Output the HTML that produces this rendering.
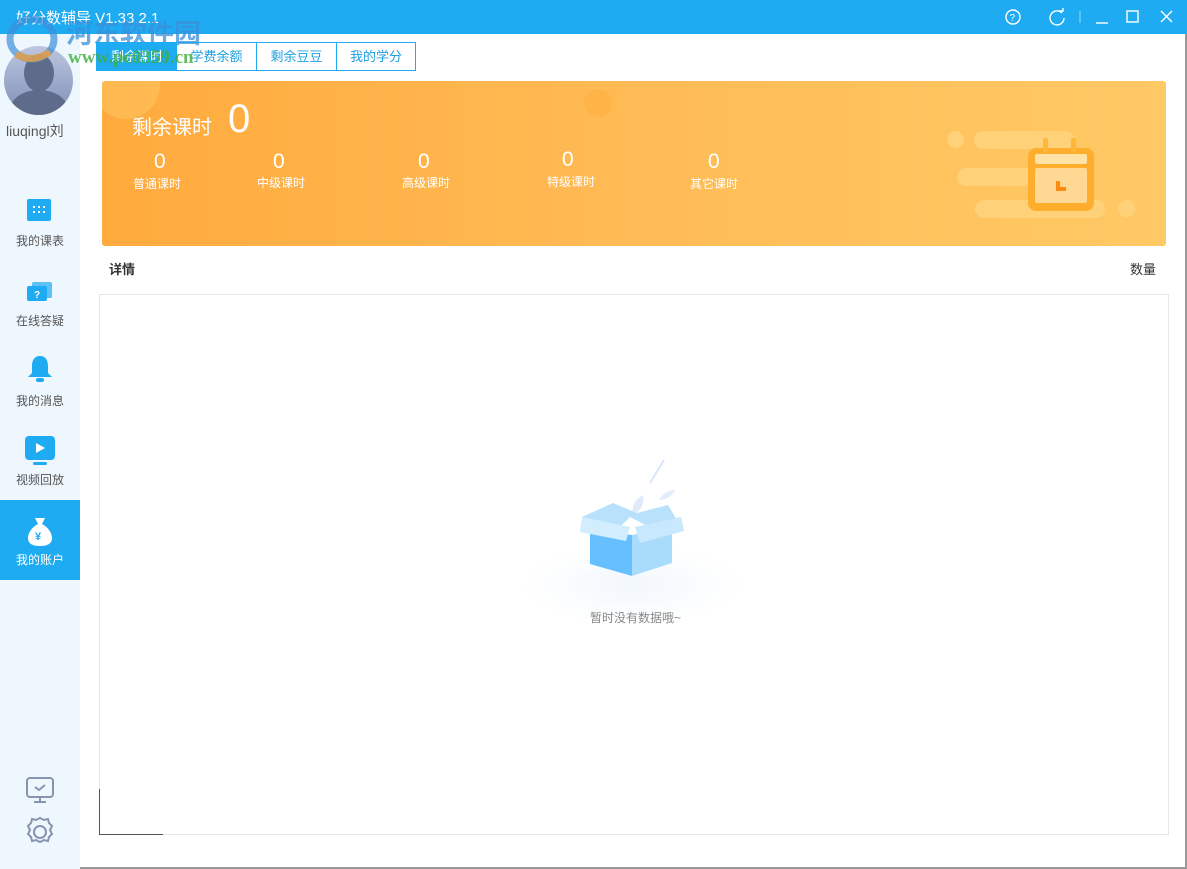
<!DOCTYPE html><html><head><meta charset="utf-8"><style>
*{margin:0;padding:0;box-sizing:border-box}
body{width:1187px;height:869px;overflow:hidden;background:#fff;font-family:"Liberation Sans","Noto Sans CJK SC",sans-serif;position:relative}
.t{position:absolute;white-space:nowrap}
</style></head><body>
<div style="position:absolute;left:0;top:0;width:1187px;height:34px;background:#1eabf2"></div>
<div class="t" style="left:16px;top:7px;color:#fff;font-size:15px">好分数辅导 V1.33.2.1</div>
<svg style="position:absolute;left:1000px;top:6px" width="180" height="22" fill="none" stroke="#fff" stroke-width="1.4">
<circle cx="13" cy="11" r="7"/><text x="9.5" y="15" fill="#fff" stroke="none" font-size="10" font-family="Liberation Sans">?</text>
<path d="M62 7a7 7 0 1 0 2 5"/><path d="M59 5h4v-3" />
<path d="M80 5v12" stroke-opacity=".4"/><path d="M96 17h12"/><rect x="127" y="5" width="11" height="11"/><path d="M161 5l11 11M172 5l-11 11"/></svg>
<div style="position:absolute;left:0;top:34px;width:80px;height:835px;background:#eef7fe"></div>
<div style="position:absolute;left:4px;top:46px;width:69px;height:69px;border-radius:50%;background:linear-gradient(#bcc6df,#7e8fb8);overflow:hidden"><div style="position:absolute;left:20px;top:8px;width:30px;height:38px;border-radius:50%;background:#5f6b8a"></div><div style="position:absolute;left:6px;top:44px;width:58px;height:40px;border-radius:50% 50% 0 0;background:#5f6b8a"></div></div>
<svg style="position:absolute;left:6px;top:14px" width="52" height="50"><ellipse cx="26" cy="25" rx="22" ry="20" fill="none" stroke="#3a8fd8" stroke-width="7" opacity=".7"/><path d="M10 40q16 10 34-2" stroke="#f0a040" stroke-width="7" fill="none" opacity=".8"/></svg>
<div class="t" style="left:66px;top:12px;color:#3a8fd8;font-size:27px;font-weight:bold;opacity:.75">河东软件园</div>
<div class="t" style="left:6px;top:121px;font-size:14px;color:#555">liuqingl刘</div>
<svg style="position:absolute;left:26px;top:196px" width="26" height="26"><rect x="1" y="3" width="24" height="22" rx="2" fill="#1eabf2"/><g fill="#fff"><rect x="7" y="10" width="2" height="2"/><rect x="12" y="10" width="2" height="2"/><rect x="17" y="10" width="2" height="2"/><rect x="7" y="15" width="2" height="2"/><rect x="12" y="15" width="2" height="2"/><rect x="17" y="15" width="2" height="2"/></g></svg>
<div class="t" style="left:16px;top:232px;font-size:12px;color:#555">我的课表</div>
<svg style="position:absolute;left:26px;top:281px" width="28" height="24"><rect x="6" y="1" width="20" height="16" rx="2" fill="#1eabf2" opacity=".7"/><rect x="1" y="5" width="20" height="15" rx="2" fill="#1eabf2"/><text x="8" y="17" fill="#fff" font-size="10" font-weight="bold" font-family="Liberation Sans">?</text></svg>
<div class="t" style="left:16px;top:312px;font-size:12px;color:#555">在线答疑</div>
<svg style="position:absolute;left:26px;top:354px" width="28" height="30"><path d="M14 2c-6 0-8 5-8 10v7l-4 4h24l-4-4v-7c0-5-2-10-8-10z" fill="#1eabf2"/><rect x="10" y="24" width="8" height="4" rx="2" fill="#1eabf2"/></svg>
<div class="t" style="left:16px;top:392px;font-size:12px;color:#555">我的消息</div>
<svg style="position:absolute;left:24px;top:436px" width="32" height="30"><rect x="1" y="0" width="30" height="24" rx="4" fill="#1eabf2"/><path d="M12 7l9 5-9 5z" fill="#fff"/><rect x="9" y="26" width="14" height="3" rx="1.5" fill="#1eabf2"/></svg>
<div class="t" style="left:16px;top:471px;font-size:12px;color:#555">视频回放</div>
<div style="position:absolute;left:0;top:500px;width:80px;height:80px;background:#1eabf2"></div>
<svg style="position:absolute;left:26px;top:516px" width="28" height="32"><path d="M9 2h10l-3 6c6 3 10 9 10 14 0 6-5 8-12 8S2 28 2 22c0-5 4-11 10-14z" fill="#fff"/><text x="9" y="24" fill="#1eabf2" font-size="11" font-family="Liberation Sans" font-weight="bold">¥</text></svg>
<div class="t" style="left:16px;top:551px;font-size:12px;color:#fff">我的账户</div>
<svg style="position:absolute;left:24px;top:775px" width="32" height="72" fill="none" stroke="#8794b0" stroke-width="2"><rect x="3" y="3" width="26" height="19" rx="3"/><path d="M16 22v5M10 27h12M11 12l4 3 6-5"/><path d="M16 43l4 2 4-1 1 4 3 3-2 4 2 4-3 3-1 4-4-1-4 2-4-2-4 1-1-4-3-3 2-4-2-4 3-3 1-4 4 1z"/><circle cx="16" cy="57" r="6"/></svg>
<div style="position:absolute;left:96px;top:42px;width:320px;height:29px;border:1px solid #1eabf2;display:flex;font-size:13px">
<div style="width:80px;background:#1eabf2;color:#fff;text-align:center;line-height:27px">剩余课时</div>
<div style="width:80px;color:#1e9fe0;text-align:center;line-height:27px;border-right:1px solid #1eabf2">学费余额</div>
<div style="width:80px;color:#1e9fe0;text-align:center;line-height:27px;border-right:1px solid #1eabf2">剩余豆豆</div>
<div style="width:78px;color:#1e9fe0;text-align:center;line-height:27px">我的学分</div></div>
<div class="t" style="left:68px;top:47px;color:#3cae3c;font-size:19px;font-weight:bold;font-family:'Liberation Serif';opacity:.8">www.pc0359.cn</div>
<div style="position:absolute;left:102px;top:81px;width:1064px;height:165px;border-radius:3px;background:linear-gradient(90deg,#ffaa3d,#ffbb55 50%,#ffc965);overflow:hidden">
<div style="position:absolute;left:-10px;top:-30px;width:68px;height:68px;border-radius:50%;background:#ffc35f;opacity:.6"></div>
<div style="position:absolute;left:482px;top:8px;width:28px;height:28px;border-radius:50%;background:#ffb447"></div>
<div style="position:absolute;left:872px;top:50px;width:100px;height:18px;border-radius:9px;background:#ffd27a"></div>
<div style="position:absolute;left:855px;top:87px;width:120px;height:18px;border-radius:9px;background:#ffd27a"></div>
<div style="position:absolute;left:873px;top:119px;width:130px;height:18px;border-radius:9px;background:#ffd27a"></div>
<div style="position:absolute;left:845px;top:50px;width:17px;height:17px;border-radius:50%;background:#ffd27a"></div>
<div style="position:absolute;left:1016px;top:119px;width:17px;height:17px;border-radius:50%;background:#ffd27a"></div>
<svg style="position:absolute;left:924px;top:57px" width="70" height="75"><rect x="2" y="10" width="66" height="63" rx="8" fill="#ffad2c"/><rect x="9" y="16" width="52" height="10" rx="2" fill="#ffe3a6"/><rect x="9" y="30" width="52" height="35" rx="2" fill="#ffd894"/><rect x="17" y="0" width="5" height="15" rx="2" fill="#ffb73a"/><rect x="45" y="0" width="5" height="15" rx="2" fill="#ffb73a"/><path d="M32 43v8h8" stroke="#ff8a10" stroke-width="4" fill="none"/></svg>
<div class="t" style="left:30px;top:30px;color:#fff;font-size:20px">剩余课时</div>
<div class="t" style="left:126px;top:16px;color:#fff;font-size:40px;font-weight:300">0</div>
<div class="t" style="left:52px;top:69px;color:#fff;font-size:21px">0</div><div class="t" style="left:31px;top:94px;color:#fff;font-size:12px">普通课时</div>
<div class="t" style="left:171px;top:69px;color:#fff;font-size:21px">0</div><div class="t" style="left:155px;top:93px;color:#fff;font-size:12px">中级课时</div>
<div class="t" style="left:316px;top:69px;color:#fff;font-size:21px">0</div><div class="t" style="left:300px;top:93px;color:#fff;font-size:12px">高级课时</div>
<div class="t" style="left:460px;top:67px;color:#fff;font-size:21px">0</div><div class="t" style="left:445px;top:92px;color:#fff;font-size:12px">特级课时</div>
<div class="t" style="left:606px;top:69px;color:#fff;font-size:21px">0</div><div class="t" style="left:588px;top:94px;color:#fff;font-size:12px">其它课时</div>
</div>
<div class="t" style="left:109px;top:259px;font-size:13px;color:#333;font-weight:bold">详情</div>
<div class="t" style="left:1130px;top:259px;font-size:13px;color:#333">数量</div>
<div style="position:absolute;left:99px;top:294px;width:1070px;height:541px;border:1px solid #e6e6e6"></div>
<div style="position:absolute;left:99px;top:789px;width:64px;height:46px;border-left:1px solid #555;border-bottom:1px solid #555"></div>
<div style="position:absolute;left:520px;top:545px;width:225px;height:80px;border-radius:50%;background:radial-gradient(#f2f7fc,#fff 70%)"></div>
<svg style="position:absolute;left:580px;top:455px" width="110" height="125"><path d="M84 5 70 28" stroke="#d8e6fb" stroke-width="2"/><path d="M95 35c-8 0-14 6-16 10 8 0 14-5 16-10z" fill="#e3ecfb"/><path d="M63 40c-8 4-12 12-10 20 8-4 12-12 10-20z" fill="#e0eafb"/><path d="M2 62 33 48 57 58 88 50 101 72 77 76 50 62 30 82z" fill="#b8e1fb"/><path d="M10 74 52 80v41l-42-12z" fill="#66c0ff"/><path d="M52 80 92 70v38l-40 13z" fill="#a9dbfb"/><path d="M2 62 50 72 46 86 0 77z" fill="#d2edfd"/><path d="M55 72 101 62 104 76 60 88z" fill="#c8e8fd"/></svg>
<div class="t" style="left:590px;top:609px;font-size:12px;color:#888">暂时没有数据哦~</div>
<div style="position:absolute;left:1185px;top:34px;width:2px;height:835px;background:#999"></div>
<div style="position:absolute;left:80px;top:867px;width:1107px;height:2px;background:#999"></div>
</body></html>
